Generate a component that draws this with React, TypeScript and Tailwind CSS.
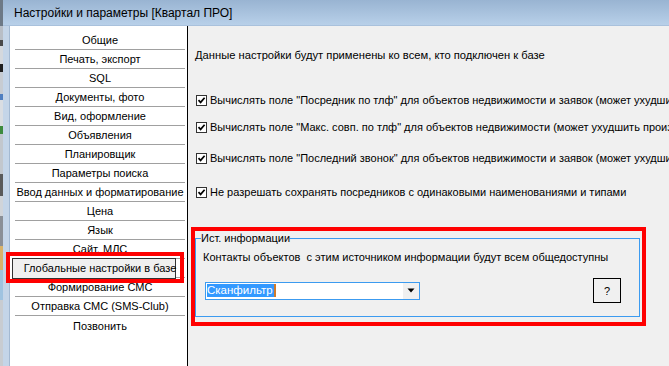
import React from "react";

const items = [
  "Общие",
  "Печать, экспорт",
  "SQL",
  "Документы, фото",
  "Вид, оформление",
  "Объявления",
  "Планировщик",
  "Параметры поиска",
  "Ввод данных и форматирование",
  "Цена",
  "Язык",
  "Сайт, МЛС",
  "Глобальные настройки в базе",
  "Формирование СМС",
  "Отправка СМС (SMS-Club)",
  "Позвонить",
];

const SELECTED = 12;

// bits of the desktop that peek out left of the window
const desktop = [
  { h: 26, c: "bg-[#6d7986]" },
  { h: 14, c: "bg-[#b8bec6]" },
  { h: 6, c: "bg-[#4a4a4a]" },
  { h: 18, c: "bg-[#d4d8dd]" },
  { h: 8, c: "bg-[#1f1f1f]" },
  { h: 22, c: "bg-[#c7ccd2]" },
  { h: 6, c: "bg-[#4f7fc0]" },
  { h: 26, c: "bg-[#d9dde2]" },
  { h: 8, c: "bg-[#3d8a3d]" },
  { h: 40, c: "bg-[#c2c7cd]" },
  { h: 22, c: "bg-[#5a5a5a]" },
  { h: 20, c: "bg-[#d0d4d9]" },
  { h: 30, c: "bg-[#8a8f96]" },
  { h: 24, c: "bg-[#d9b36a]" },
  { h: 30, c: "bg-[#9fc3e0]" },
  { h: 66, c: "bg-[#c8ccd1]" },
];

function Check() {
  return (
    <span className="w-[11px] h-[11px] shrink-0 border border-[#333333] bg-white flex items-center justify-center">
      <svg width="9" height="9" viewBox="0 0 9 9">
        <path d="M1.5 4.2 L3.6 6.4 L7.6 1.8" fill="none" stroke="#000" strokeWidth="1.7" />
      </svg>
    </span>
  );
}

function CheckRow({ text, className }: { text: string; className: string }) {
  return (
    <div className={`flex items-center h-[16px] pl-[8px] ${className}`}>
      <Check />
      <span className="ml-[3px]">{text}</span>
    </div>
  );
}

export default function App() {
  return (
    <div className="w-[669px] h-[366px] overflow-hidden flex bg-[#f0f0f0] text-black font-['Liberation_Sans',Arial,sans-serif] text-[11px] leading-[16px]">
      <div className="w-[3px] shrink-0 flex flex-col">
        {desktop.map((d, i) => (
          <div key={i} className={`${d.c} shrink-0`} style={{ height: d.h }} />
        ))}
      </div>

      <div className="flex-1 flex flex-col min-w-0">
        <div className="h-[26px] shrink-0 flex items-center pl-[11px] bg-linear-to-b from-[#99b4d2] to-[#b8d0e9] border-b border-[#a9c1dc] text-[12px]">
          Настройки и параметры [Квартал ПРО]
        </div>

        <div className="flex flex-1 min-h-0">
          <div className="w-[7px] shrink-0 bg-[#c4d5e8] border-r border-[#a3b9d2]" />

          <div className="w-[177px] shrink-0 bg-white pt-[5px] pl-[5px] pr-[2px] relative z-10 whitespace-nowrap">
            {items.map((label, i) => (
              <div
                key={label}
                className={`relative h-[19px] flex items-center justify-center ${
                  i < items.length - 1 ? "border-b border-[#a0a0a0]" : ""
                }`}
              >
                {i === SELECTED && (
                  <>
                    <div className="absolute left-[-3px] top-[-1px] w-[164px] h-[21px] bg-[#f0f0f0] border border-[#333333]" />
                    <div className="absolute left-[-9px] top-[-7px] w-[178px] h-[31px] border-4 border-[#ff0000] z-20" />
                  </>
                )}
                <span className="relative z-10">{label}</span>
              </div>
            ))}
          </div>

          <div className="w-px shrink-0 bg-black" />

          <div className="flex-1 min-w-0 overflow-hidden whitespace-nowrap">
            <div className="mt-[21px] pl-[7px] text-[11.2px]">
              Данные настройки будут применены ко всем, кто подключен к базе
            </div>

            <CheckRow
              className="mt-[29px]"
              text={'Вычислять поле "Посредник по тлф" для объектов недвижимости и заявок (может ухудшить производительность)'}
            />
            <CheckRow
              className="mt-[11px]"
              text={'Вычислять поле "Макс. совп. по тлф" для объектов недвижимости (может ухудшить производительность)'}
            />
            <CheckRow
              className="mt-[15px]"
              text={'Вычислять поле "Последний звонок" для объектов недвижимости и заявок (может ухудшить производительность)'}
            />
            <CheckRow
              className="mt-[18px]"
              text="Не разрешать сохранять посредников с одинаковыми наименованиями и типами"
            />

            <div className="mt-[27px] ml-[3px] w-[455px] h-[99px] border-4 border-[#ff0000]">
              <fieldset className="w-[445px] h-[86px] border border-[#3c9bf0] p-0 m-0">
                <legend className="ml-[5px] p-0 leading-[14px]">Ист. информации</legend>
                <div className="mt-[4px] pl-[7px]">
                  Контакты объектов&nbsp; с этим источником информации будут всем общедоступны
                </div>
                <div className="mt-[13px] h-[25px] flex items-center">
                  <div className="ml-[9px] w-[215px] h-[18px] border border-[#3c9bf0] bg-white flex items-center">
                    <span className="ml-[1px] bg-[#3399ff] text-white text-[11.5px] leading-[13px] pr-[1px]">Сканфильтр</span>
                    <span className="w-[2px] h-[13px] bg-[#d07a2a]" />
                    <span className="ml-auto w-[16px] h-full bg-[#f0f0f0] flex items-center justify-center">
                      <svg width="8" height="5" viewBox="0 0 8 5">
                        <path d="M0.5 0.5 H7.5 L4 4.5 Z" fill="#000" />
                      </svg>
                    </span>
                  </div>
                  <div className="ml-[173px] w-[28px] h-[25px] border border-black flex items-center justify-center">
                    ?
                  </div>
                </div>
              </fieldset>
            </div>
          </div>
        </div>
      </div>
    </div>
  );
}
